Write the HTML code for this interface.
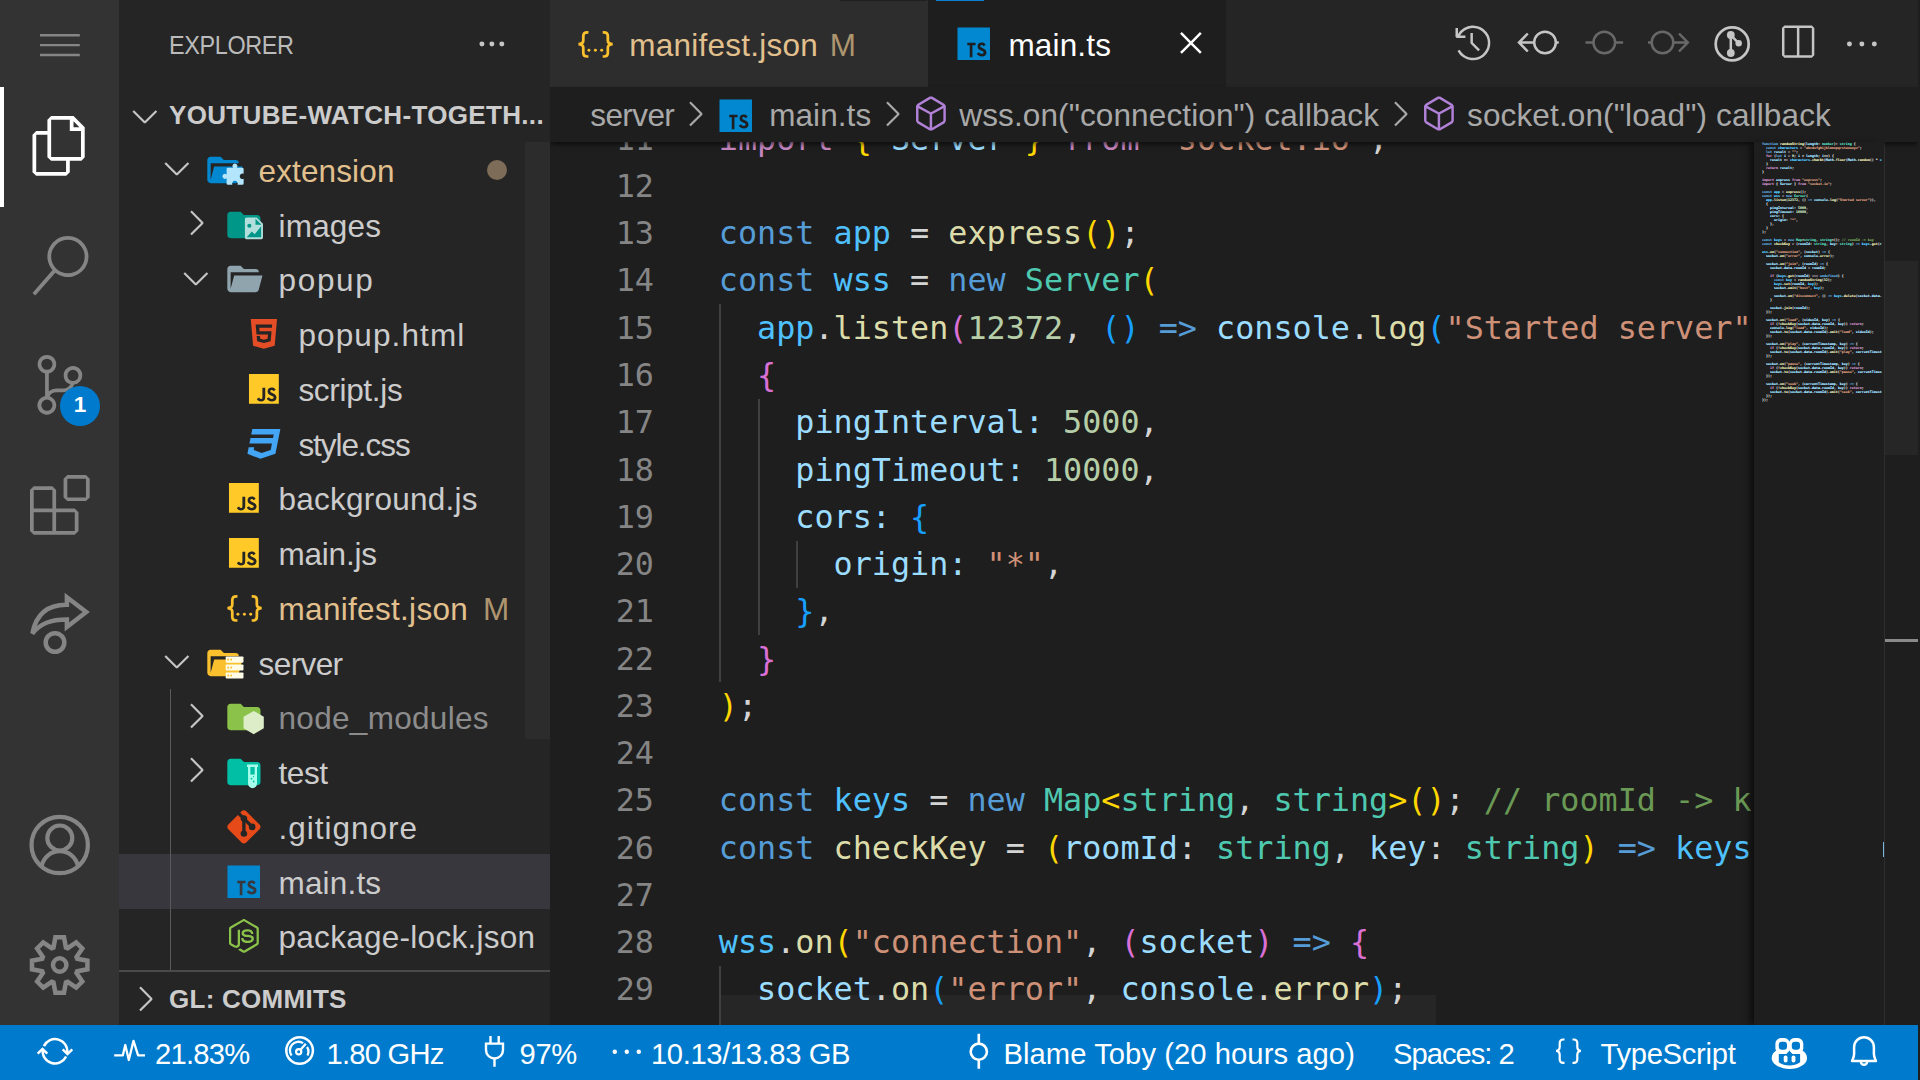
<!DOCTYPE html>
<html lang="en">
<head>
<meta charset="utf-8">
<title>main.ts - youtube-watch-together - Visual Studio Code</title>
<style>
*{box-sizing:border-box;margin:0;padding:0}
html,body{width:1920px;height:1080px;overflow:hidden;background:#1e1e1e}
body{font-family:"Liberation Sans",sans-serif;font-size:31.5px;color:#cccccc;position:relative}
.abs,.abs>*{position:absolute}
#app{position:absolute;left:0;top:0;width:1918px;height:1080px;overflow:hidden;background:#1e1e1e}
#activity{position:absolute;left:0;top:0;width:119px;height:1026px;background:#333333}
#sidebar{position:absolute;left:119px;top:0;width:431px;height:1026px;background:#252526;overflow:hidden}
#editor{position:absolute;left:550px;top:0;width:1368px;height:1026px;background:#1e1e1e;overflow:hidden}
#status{z-index:6;position:absolute;left:0;top:1025px;width:1918px;height:55px;background:#007acc;color:#fff;overflow:hidden}
svg{position:absolute;overflow:visible}
.t{position:absolute;white-space:pre;line-height:1}
/* activity bar */
#activity svg{fill:#858585}
/* sidebar */
.row{position:absolute;left:0;width:431px;height:55px}
.lbl{position:absolute;white-space:pre;line-height:55px;top:2px;font-size:31.5px;color:#cccccc}
.chev{fill:none;stroke:#c5c5c5;stroke-width:2.6;stroke-linecap:butt;stroke-linejoin:miter}
/* code */
#code{position:absolute;left:0;top:142px;width:1202.500px;height:884px;overflow:hidden;font-family:"DejaVu Sans Mono","Liberation Mono",monospace;font-size:31.78px;color:#d4d4d4}
.ln{position:absolute;left:0;height:47.27px;line-height:47.27px;white-space:pre}
.num{position:absolute;left:0;width:104px;text-align:right;color:#858585}
.src{position:absolute;left:168.800px}
.k{color:#569cd6}.c{color:#4fc1ff}.v{color:#9cdcfe}.f{color:#dcdcaa}.ty{color:#4ec9b0}.s{color:#ce9178}.n{color:#b5cea8}.cm{color:#6a9955}.ct{color:#c586c0}
.b1{color:#ffd700}.b2{color:#da70d6}.b3{color:#179fff}
.ml .b1,.ml .b2,.ml .b3{color:#c8c8c8}
.ml{height:4px;white-space:pre;overflow:hidden}
.guide{position:absolute;width:2px;background:#404040}
</style>
</head>
<body>
<div id="app">
<div id="activity">
  <svg style="left:39.6px;top:23.6px" width="39.8" height="39.8" viewBox="0 0 16 16"><path d="M16 5H0V4h16v1zm0 8H0v-1h16v1zm0-4.008H0V8h16v.992z"/></svg>
  <div style="position:absolute;left:0;top:87px;width:4px;height:120px;background:#ffffff"></div>
  <svg style="left:29.6px;top:116.4px;fill:#ffffff" width="59.7" height="59.7" viewBox="0 0 24 24"><path d="M17.5 0h-9L7 1.5V6H2.5L1 7.500v15.07L2.5 24h12.07L16 22.57V18h4.7l1.3-1.43V4.5L17.5 0zm0 2.12l2.38 2.38H17.5V2.12zm-3 20.38h-12v-15H7v9.07L8.5 18h6v4.5zm6-6h-12v-15H16V6h4.5v10.5z"/></svg>
  <svg style="left:29.6px;top:235.8px" width="59.7" height="59.7" viewBox="0 0 24 24"><path d="M15.25 0a8.25 8.25 0 0 0-6.18 13.72L1 22.88l1.12 1 8.05-9.12A8.251 8.251 0 1 0 15.25.01V0zm0 15a6.75 6.75 0 1 1 0-13.5 6.75 6.75 0 0 1 0 13.5z"/></svg>
  <svg style="left:29.6px;top:355.2px" width="59.7" height="59.7" viewBox="0 0 24 24"><path d="M21.007 8.222A3.738 3.738 0 0 0 15.045 5.2a3.737 3.737 0 0 0 1.156 6.583 2.988 2.988 0 0 1-2.668 1.67h-2.99a4.456 4.456 0 0 0-2.989 1.165V7.4a3.737 3.737 0 1 0-1.494 0v9.117a3.776 3.776 0 1 0 1.816.099 2.99 2.99 0 0 1 2.668-1.667h2.99a4.484 4.484 0 0 0 4.223-3.039 3.736 3.736 0 0 0 3.25-3.687zM4.565 3.738a2.242 2.242 0 1 1 4.484 0 2.242 2.242 0 0 1-4.484 0zm4.484 16.441a2.242 2.242 0 1 1-4.484 0 2.242 2.242 0 0 1 4.484 0zm8.221-9.715a2.242 2.242 0 1 1 0-4.485 2.242 2.242 0 0 1 0 4.485z"/></svg>
  <div style="position:absolute;left:60px;top:385.5px;width:40px;height:40px;border-radius:20px;background:#007acc"></div>
  <div class="t" style="left:60px;top:394px;width:40px;text-align:center;font-size:22.5px;font-weight:bold;color:#fff">1</div>
  <svg style="left:29.6px;top:474.6px" width="59.7" height="59.7" viewBox="0 0 24 24"><path d="M13.5 1.5L15 0h7.5L24 1.5V9l-1.5 1.5H15L13.500 9V1.5zm1.5 0V9h7.5V1.5H15zM0 15V6l1.5-1.5H9L10.5 6v7.5H18l1.5 1.5v7.5L18 24H1.5L0 22.5V15zm9-1.5V6H1.5v7.5H9zM9 15H1.5v7.5H9V15zm1.500 7.5H18V15h-7.5v7.5z"/></svg>
  <svg style="left:0;top:0;fill:none;stroke:#858585;stroke-width:4.5" width="119" height="1026" viewBox="0 0 119 1026">
    <path d="M66.9 604.8C50 604.600 36.500 612 32.400 633.500C40.500 623.500 50.500 619.500 66.900 619.500V627L86.200 612L66.900 597.200Z" stroke-linejoin="miter"/>
    <circle cx="55" cy="642.500" r="9.300"/>
    <circle cx="59.700" cy="845" r="28.200" stroke-width="4.200"/>
    <circle cx="59.800" cy="838" r="12.500" stroke-width="4.200"/>
    <path d="M41.400 866.500C43.500 857 51 851.200 59.800 851.200S76.100 857 78.200 866.500" stroke-width="4.200"/>
    <path d="M53.5 947.5L55.4 937.3L64.0 937.3L65.9 947.5L67.7 948.2L76.2 942.4L82.3 948.5L76.5 957.0L77.2 958.8L87.4 960.7L87.4 969.3L77.2 971.2L76.5 973.0L82.3 981.5L76.2 987.6L67.7 981.8L65.9 982.5L64.0 992.7L55.4 992.7L53.5 982.5L51.7 981.8L43.2 987.6L37.1 981.5L42.9 973.0L42.2 971.2L32.0 969.3L32.0 960.7L42.2 958.8L42.9 957.0L37.1 948.5L43.2 942.4L51.7 948.2Z" stroke-linejoin="miter"/>
    <circle cx="59.700" cy="965" r="6.700"/>
  </svg>
</div>
<div id="sidebar">
  <div class="t" style="left:49.500px;top:32px;font-size:26px;color:#bbbbbb;transform:scaleX(.9);transform-origin:0 0;letter-spacing:-0.4px" id="t_explorer">EXPLORER</div>
  <svg style="left:353px;top:23.600px;fill:#c5c5c5" width="39.8" height="39.8" viewBox="0 0 16 16"><circle cx="4" cy="8" r="1"/><circle cx="8" cy="8" r="1"/><circle cx="12" cy="8" r="1"/></svg>
  <svg style="left:5.900px;top:95.600px;fill:#c5c5c5" width="39.8" height="39.8" viewBox="0 0 16 16"><path d="M7.976 10.072l4.357-4.357.62.618L8.284 11h-.618L3 6.333l.619-.618 4.357 4.357z"/></svg>
  <div class="t" style="left:50px;top:102px;font-size:26px;font-weight:bold;color:#cccccc;letter-spacing:0.33px" id="t_root">YOUTUBE-WATCH-TOGETH...</div>
  <div style="position:absolute;left:406px;top:142px;width:25px;height:596.700px;background:#2c2c2d"></div>
  <div class="row" style="top:142.00px">
    <svg style="left:37.5px;top:6.300px;fill:#c5c5c5" width="39.8" height="39.8" viewBox="0 0 16 16"><path d="M7.976 10.072l4.357-4.357.62.618L8.284 11h-.618L3 6.333l.619-.618 4.357 4.357z"/></svg>
    <svg style="left:84.7px;top:8px" width="39.8" height="39.8" viewBox="0 0 24 24"><path fill="#0288d1" d="M19 20H4c-1.110 0-2-.900-2-2V6c0-1.110.890-2 2-2h6l2 2h7a2 2 0 0 1 2 2H4v10l2.140-8h17.070l-2.280 8.500c-.230.870-1.010 1.500-1.930 1.500z"/><path fill="#b3e5fc" d="M14.430 10.740H17.600A1.500 1.500 0 1 1 19.700 10.740H23.100a.800 .800 0 0 1 .800 .800V14.300A1.700 1.700 0 1 0 23.900 17.400V20.200a.800 .800 0 0 1-.800 .800H20.200A1.700 1.700 0 1 0 17.100 21H14.430a.800 .800 0 0 1-.800-.800V17A1.500 1.500 0 1 1 13.630 14.760V11.540a.800 .800 0 0 1 .800-.800Z"/></svg>
    <span class="lbl" style="left:139.6px;color:#e2c08d;letter-spacing:0.12px">extension</span>
    <div style="position:absolute;left:368px;top:17.500px;width:20px;height:20px;border-radius:10px;background:#7d6c57"></div>
  </div>
  <div class="row" style="top:196.74px">
    <svg style="left:57.4px;top:6.300px;fill:#c5c5c5" width="39.8" height="39.8" viewBox="0 0 16 16"><path d="M10.072 8.024L5.715 3.667l.618-.62L11 7.716v.618L6.333 13l-.618-.619 4.357-4.357z"/></svg>
    <svg style="left:104.6px;top:8px" width="39.8" height="39.8" viewBox="0 0 24 24"><path fill="#009688" d="M10 4H4c-1.110 0-2 .890-2 2v12a2 2 0 0 0 2 2h16a2 2 0 0 0 2-2V8c0-1.110-.900-2-2-2h-8l-2-2z"/><g transform="translate(0 -1.200)"><path fill="#b2dfdb" d="M13.700 8.700h6l3.800 3.800v8.300c0 .600-.500 1.100-1.100 1.100h-8.700c-.600 0-1.100-.500-1.100-1.100v-11c0-.600.500-1.100 1.100-1.100z"/><path fill="#009688" d="M19 9.500l3.600 3.600H19zM13.700 20.700l3.100-3.500 1.700 1.600 3.900-4.800v6.700z"/><circle fill="#009688" cx="15.300" cy="13.700" r="1.250"/></g></svg>
    <span class="lbl" style="left:159.5px;letter-spacing:0.2px">images</span>
  </div>
  <div class="row" style="top:251.48px">
    <svg style="left:57.4px;top:6.300px;fill:#c5c5c5" width="39.8" height="39.8" viewBox="0 0 16 16"><path d="M7.976 10.072l4.357-4.357.62.618L8.284 11h-.618L3 6.333l.619-.618 4.357 4.357z"/></svg>
    <svg style="left:104.6px;top:8px" width="39.8" height="39.8" viewBox="0 0 24 24"><path fill="#90a4ae" d="M19 20H4c-1.110 0-2-.900-2-2V6c0-1.110.890-2 2-2h6l2 2h7a2 2 0 0 1 2 2H4v10l2.140-8h17.070l-2.280 8.500c-.230.870-1.010 1.500-1.930 1.500z"/></svg>
    <span class="lbl" style="left:159.5px;letter-spacing:1.67px">popup</span>
  </div>
  <div class="row" style="top:306.22px">
    <svg style="left:124.5px;top:8px" width="39.8" height="39.8" viewBox="0 0 24 24"><path fill="#e44d26" d="M12 17.560l4.070-1.130.550-6.100H9.380L9.200 8.300h7.600l.200-1.990H7l.560 6.010h6.890l-.230 2.580-2.220.600-2.220-.600-.140-1.660h-2l.290 3.190L12 17.560M4.070 3h15.860L18.500 19.200 12 21l-6.500-1.800L4.070 3z"/></svg>
    <span class="lbl" style="left:179.4px;letter-spacing:1.11px">popup.html</span>
  </div>
  <div class="row" style="top:360.96px">
    <svg style="left:124.5px;top:8px" width="39.8" height="39.8" viewBox="0 0 24 24"><path fill="#ffca28" d="M3 3h18v18H3V3m4.730 15.040c.400.850 1.190 1.550 2.540 1.550 1.500 0 2.530-.800 2.530-2.550v-5.780h-1.700V17c0 .860-.350 1.080-.900 1.080-.580 0-.820-.400-1.090-.870l-1.380.830m5.980-.180c.500.980 1.510 1.730 3.090 1.730 1.600 0 2.800-.830 2.800-2.360 0-1.410-.810-2.040-2.250-2.660l-.420-.180c-.730-.310-1.040-.520-1.040-1.020 0-.410.310-.730.810-.730.480 0 .800.210 1.090.730l1.310-.870c-.550-.960-1.330-1.330-2.400-1.330-1.510 0-2.480.960-2.480 2.230 0 1.380.810 2.030 2.030 2.550l.420.180c.780.340 1.240.550 1.240 1.130 0 .480-.450.830-1.150.830-.830 0-1.310-.430-1.670-1.030l-1.380.800z"/></svg>
    <span class="lbl" style="left:179.4px;letter-spacing:-0.31px">script.js</span>
  </div>
  <div class="row" style="top:415.70px">
    <svg style="left:124.5px;top:8px" width="39.8" height="39.8" viewBox="0 0 24 24"><path fill="#42a5f5" d="M5 3l-.650 3.340h13.590L17.500 8.500H3.920l-.660 3.330h13.590l-.760 3.810-5.480 1.810-4.750-1.810.330-1.640H2.850l-.790 4 7.850 3 9.050-3 1.200-6.030.240-1.210L21.940 3H5z"/></svg>
    <span class="lbl" style="left:179.4px;letter-spacing:-1.06px">style.css</span>
  </div>
  <div class="row" style="top:470.44px">
    <svg style="left:104.6px;top:8px" width="39.8" height="39.8" viewBox="0 0 24 24"><path fill="#ffca28" d="M3 3h18v18H3V3m4.730 15.040c.400.850 1.190 1.550 2.540 1.550 1.500 0 2.530-.800 2.530-2.550v-5.780h-1.700V17c0 .860-.350 1.080-.900 1.080-.580 0-.820-.400-1.090-.870l-1.380.830m5.980-.180c.500.980 1.510 1.730 3.090 1.730 1.600 0 2.800-.830 2.800-2.360 0-1.410-.810-2.040-2.250-2.660l-.420-.180c-.730-.310-1.040-.520-1.040-1.020 0-.410.310-.730.810-.730.480 0 .800.210 1.090.730l1.310-.870c-.550-.960-1.330-1.330-2.400-1.330-1.510 0-2.480.960-2.480 2.230 0 1.380.810 2.030 2.030 2.550l.420.180c.780.340 1.240.550 1.240 1.130 0 .480-.450.830-1.150.830-.830 0-1.310-.430-1.670-1.030l-1.380.800z"/></svg>
    <span class="lbl" style="left:159.5px;letter-spacing:0.25px">background.js</span>
  </div>
  <div class="row" style="top:525.18px">
    <svg style="left:104.6px;top:8px" width="39.8" height="39.8" viewBox="0 0 24 24"><path fill="#ffca28" d="M3 3h18v18H3V3m4.730 15.040c.400.850 1.190 1.550 2.540 1.550 1.500 0 2.530-.800 2.530-2.550v-5.780h-1.700V17c0 .860-.350 1.080-.900 1.080-.580 0-.820-.400-1.090-.870l-1.380.830m5.980-.180c.500.980 1.510 1.730 3.090 1.730 1.600 0 2.800-.830 2.800-2.360 0-1.410-.810-2.040-2.250-2.660l-.420-.180c-.730-.310-1.040-.520-1.040-1.020 0-.410.310-.730.810-.730.480 0 .800.210 1.090.730l1.310-.870c-.550-.960-1.330-1.330-2.400-1.330-1.510 0-2.480.960-2.480 2.230 0 1.380.810 2.030 2.030 2.550l.420.180c.780.340 1.240.550 1.240 1.130 0 .480-.450.830-1.150.830-.830 0-1.310-.430-1.670-1.030l-1.380.800z"/></svg>
    <span class="lbl" style="left:159.5px;letter-spacing:-0.22px">main.js</span>
  </div>
  <div class="row" style="top:579.92px">
    <svg style="left:104.6px;top:8px" width="39.8" height="39.8" viewBox="0 0 24 24"><g fill="none" stroke="#fbc02d" stroke-width="1.650"><path d="M8.100 5H7.400C5.600 5 5 5.800 5 7.300v2.700c0 1.400-.900 2.100-2.900 2.200C4.100 12.300 5 13 5 14.400v2.900c0 1.500.600 2.300 2.400 2.300h.700"/><path d="M16.700 5h.700c1.800 0 2.400.800 2.400 2.300v2.700c0 1.400.900 2.100 2.900 2.200-2 .100-2.900.800-2.900 2.200v2.900c0 1.500-.600 2.300-2.400 2.300h-.700"/></g><g fill="#fbc02d"><circle cx="8.400" cy="15.900" r=".900"/><circle cx="12.300" cy="15.900" r=".900"/><circle cx="16.100" cy="15.900" r=".900"/></g></svg>
    <span class="lbl" style="left:159.5px;color:#e2c08d;letter-spacing:0.31px">manifest.json</span>
    <span class="lbl" style="left:364px;color:#ad956f">M</span>
  </div>
  <div class="row" style="top:634.66px">
    <svg style="left:37.5px;top:6.300px;fill:#c5c5c5" width="39.8" height="39.8" viewBox="0 0 16 16"><path d="M7.976 10.072l4.357-4.357.62.618L8.284 11h-.618L3 6.333l.619-.618 4.357 4.357z"/></svg>
    <svg style="left:84.7px;top:8px" width="39.8" height="39.8" viewBox="0 0 24 24"><path fill="#fbc02d" d="M19 20H4c-1.110 0-2-.900-2-2V6c0-1.110.890-2 2-2h6l2 2h7a2 2 0 0 1 2 2H4v10l2.140-8h17.070l-2.280 8.500c-.230.870-1.010 1.500-1.930 1.500z"/><g fill="#fffde7"><rect x="13.100" y="8.150" width="10.700" height="3.700" rx=".500"/><rect x="13.100" y="12.950" width="10.700" height="3.700" rx=".500"/><rect x="13.100" y="17.750" width="10.700" height="3.700" rx=".500"/></g><g fill="#fbc02d"><rect x="14.100" y="9.450" width="1" height="1.100"/><rect x="15.900" y="9.450" width="1" height="1.100"/><rect x="14.100" y="14.250" width="1" height="1.100"/><rect x="15.900" y="14.250" width="1" height="1.100"/><rect x="14.100" y="19.050" width="1" height="1.100"/><rect x="15.900" y="19.050" width="1" height="1.100"/></g></svg>
    <span class="lbl" style="left:139.6px;letter-spacing:-0.6px">server</span>
  </div>
  <div class="row" style="top:689.40px">
    <svg style="left:57.4px;top:6.300px;fill:#c5c5c5" width="39.8" height="39.8" viewBox="0 0 16 16"><path d="M10.072 8.024L5.715 3.667l.618-.62L11 7.716v.618L6.333 13l-.618-.619 4.357-4.357z"/></svg>
    <svg style="left:104.6px;top:8px" width="39.8" height="39.8" viewBox="0 0 24 24"><path fill="#8bc34a" d="M10 4H4c-1.110 0-2 .890-2 2v12a2 2 0 0 0 2 2h16a2 2 0 0 0 2-2V8c0-1.110-.900-2-2-2h-8l-2-2z"/><path fill="#dcedc8" d="M17.900 8.400l6.100 3.500v7l-6.100 3.500-6.100-3.500v-7z"/></svg>
    <span class="lbl" style="left:159.5px;color:#8c8c8c;letter-spacing:0.31px">node_modules</span>
  </div>
  <div class="row" style="top:744.14px">
    <svg style="left:57.4px;top:6.300px;fill:#c5c5c5" width="39.8" height="39.8" viewBox="0 0 16 16"><path d="M10.072 8.024L5.715 3.667l.618-.62L11 7.716v.618L6.333 13l-.618-.619 4.357-4.357z"/></svg>
    <svg style="left:104.6px;top:8px" width="39.8" height="39.8" viewBox="0 0 24 24"><path fill="#00bfa5" d="M10 4H4c-1.110 0-2 .890-2 2v12a2 2 0 0 0 2 2h16a2 2 0 0 0 2-2V8c0-1.110-.900-2-2-2h-8l-2-2z"/><g transform="translate(0 -1.200)"><path fill="#a7ffeb" d="M13.900 8.700h6.600v1.500h-.600v10.100a2.700 2.700 0 0 1-5.400 0V10.200h-.600z"/><path fill="#00bfa5" d="M15.900 10.200h2.600v4.600h-2.600z"/><circle fill="#00bfa5" cx="16.600" cy="17.300" r=".550"/><circle fill="#00bfa5" cx="17.900" cy="19" r=".550"/><circle fill="#00bfa5" cx="17.800" cy="16.100" r=".400"/></g></svg>
    <span class="lbl" style="left:159.5px;letter-spacing:-0.43px">test</span>
  </div>
  <div class="row" style="top:798.88px">
    <svg style="left:104.6px;top:8px" width="39.8" height="39.8" viewBox="0 0 24 24"><path fill="#e64a19" d="M2.600 10.590L8.380 4.800l1.690 1.700c-.240.850.150 1.780.930 2.230v5.540c-.600.340-1 .990-1 1.730a2 2 0 0 0 2 2 2 2 0 0 0 2-2c0-.740-.400-1.390-1-1.730V9.410l2.070 2.090c-.070.150-.070.320-.070.500a2 2 0 0 0 2 2 2 2 0 0 0 2-2 2 2 0 0 0-2-2c-.180 0-.350 0-.500.070L13.930 7.500a1.980 1.980 0 0 0-1.150-2.340c-.430-.160-.880-.200-1.280-.090L9.800 3.380l.790-.780c.780-.790 2.040-.790 2.820 0l7.990 7.990c.790.780.790 2.040 0 2.820l-7.990 7.990c-.780.790-2.040.790-2.820 0L2.600 13.410c-.790-.780-.790-2.040 0-2.820z"/></svg>
    <span class="lbl" style="left:159.5px;letter-spacing:1.0px">.gitignore</span>
  </div>
  <div class="row" style="top:853.62px;background:#37373d">
    <svg style="left:104.6px;top:8px" width="39.8" height="39.8" viewBox="0 0 24 24"><path fill="#0288d1" d="M2.100 2.100h19.600v19.600H2.100V2.100m11.610 15.760c.500.980 1.510 1.730 3.090 1.730 1.600 0 2.800-.830 2.800-2.360 0-1.410-.810-2.040-2.250-2.660l-.420-.180c-.730-.310-1.040-.520-1.040-1.020 0-.410.310-.730.810-.730.480 0 .800.210 1.090.730l1.310-.870c-.550-.960-1.330-1.330-2.400-1.330-1.510 0-2.480.960-2.480 2.230 0 1.380.810 2.030 2.030 2.550l.420.180c.740.320 1.180.520 1.180 1.070 0 .460-.430.790-1.100.790-.800 0-1.250-.410-1.600-.980l-1.310.760M13 11.250H8v1.500h1.500V20h1.610v-7.250H13v-1.500z"/></svg>
    <span class="lbl" style="left:159.5px;letter-spacing:0.17px">main.ts</span>
  </div>
  <div class="row" style="top:908.36px">
    <svg style="left:104.6px;top:8px" width="39.8" height="39.8" viewBox="0 0 24 24"><path fill="#8bc34a" d="M12 1.850c-.270 0-.550.070-.780.200l-7.440 4.300c-.480.280-.780.800-.780 1.360v8.580c0 .560.300 1.080.780 1.360l1.950 1.120c.950.460 1.270.470 1.710.470 1.400 0 2.210-.850 2.210-2.330V8.440c0-.120-.100-.220-.220-.220h-.930c-.130 0-.230.100-.230.220v8.470c0 .660-.680 1.310-1.770.760L4.450 16.500a.26.26 0 0 1-.110-.210V7.710c0-.090.040-.170.110-.210l7.440-4.290c.060-.040.160-.040.220 0l7.440 4.290c.070.040.110.120.110.210v8.580c0 .080-.040.160-.110.210l-7.440 4.290c-.060.040-.160.040-.230 0L10 19.650c-.080-.030-.160-.040-.210-.010-.530.300-.630.360-1.120.510-.120.040-.310.110.070.320l2.480 1.470c.240.140.500.210.780.210s.540-.070.780-.210l7.440-4.290c.480-.280.780-.800.780-1.360V7.710c0-.560-.300-1.080-.780-1.360l-7.440-4.300c-.230-.130-.500-.200-.780-.200M14 8c-2.120 0-3.390.890-3.390 2.390 0 1.610 1.260 2.080 3.300 2.280 2.430.240 2.620.600 2.620 1.080 0 .830-.670 1.180-2.230 1.180-1.980 0-2.400-.490-2.540-1.470a.226.226 0 0 0-.220-.180h-.960c-.120 0-.210.090-.210.220 0 1.240.680 2.740 3.940 2.740 2.350 0 3.700-.930 3.700-2.550 0-1.610-1.080-2.030-3.370-2.340-2.310-.300-2.540-.460-2.540-1 0-.450.200-1.050 1.910-1.050 1.500 0 2.090.330 2.320 1.360.020.100.110.170.210.170h.970c.050 0 .110-.020.150-.070.040-.040.070-.100.050-.160C17.560 8.820 16.380 8 14 8z"/></svg>
    <span class="lbl" style="left:159.5px;letter-spacing:0.28px">package-lock.json</span>
  </div>
  <div style="position:absolute;left:50.500px;top:689.400px;width:1.500px;height:281px;background:#5a5a5a"></div>
  <div style="position:absolute;left:0;top:970.300px;width:431px;height:1.500px;background:#4a4a4b"></div>
  <svg style="left:5.900px;top:978.800px;fill:#c5c5c5" width="39.8" height="39.8" viewBox="0 0 16 16"><path d="M10.072 8.024L5.715 3.667l.618-.62L11 7.716v.618L6.333 13l-.618-.619 4.357-4.357z"/></svg>
  <div class="t" style="left:50px;top:986.300px;font-size:26px;font-weight:bold;color:#cccccc;letter-spacing:0.27px" id="t_gl">GL: COMMITS</div>
</div>
<div id="editor">
  <div id="tabs" style="position:absolute;left:0;top:0;width:1368px;height:87px;background:#252526">
    <div style="position:absolute;left:0;top:0;width:377.500px;height:87px;background:#2d2d2d"></div>
    <div style="position:absolute;left:378px;top:0;width:297.500px;height:87px;background:#1e1e1e"></div>
    <div style="position:absolute;left:290px;top:0;width:87px;height:1.200px;background:#1f1f1f"></div>
    <div style="position:absolute;left:386px;top:0;width:48px;height:1.300px;background:#0a7fd4"></div>
    <svg style="left:24.600px;top:24.400px" width="39.8" height="39.8" viewBox="0 0 24 24"><g fill="none" stroke="#fbc02d" stroke-width="1.650"><path d="M8.100 5H7.400C5.600 5 5 5.800 5 7.300v2.700c0 1.400-.900 2.100-2.900 2.200C4.100 12.300 5 13 5 14.400v2.900c0 1.500.600 2.300 2.400 2.300h.700"/><path d="M16.700 5h.700c1.800 0 2.400.800 2.400 2.300v2.700c0 1.400.900 2.100 2.900 2.200-2 .100-2.900.800-2.900 2.200v2.900c0 1.500-.600 2.300-2.400 2.300h-.700"/></g><g fill="#fbc02d"><circle cx="8.400" cy="15.900" r=".900"/><circle cx="12.300" cy="15.900" r=".900"/><circle cx="16.100" cy="15.900" r=".900"/></g></svg>
    <div class="t" id="tab1" style="left:79.300px;top:30.300px;color:#e2c08d;letter-spacing:0.25px">manifest.json</div>
    <div class="t" style="left:279.800px;top:30.300px;color:#ad956f">M</div>
    <svg style="left:404.300px;top:24.300px" width="39.8" height="39.8" viewBox="0 0 24 24"><path fill="#0288d1" d="M2.100 2.100h19.600v19.600H2.100V2.100m11.610 15.760c.500.980 1.510 1.730 3.090 1.730 1.600 0 2.800-.830 2.800-2.360 0-1.410-.810-2.040-2.250-2.660l-.420-.180c-.730-.310-1.040-.520-1.040-1.020 0-.410.310-.730.810-.730.480 0 .800.210 1.090.730l1.310-.870c-.550-.960-1.330-1.330-2.400-1.330-1.510 0-2.480.960-2.480 2.230 0 1.380.810 2.030 2.030 2.550l.420.180c.740.320 1.180.520 1.180 1.070 0 .460-.430.790-1.100.790-.800 0-1.250-.410-1.600-.980l-1.310.760M13 11.250H8v1.500h1.500V20h1.610v-7.250H13v-1.500z"/></svg>
    <div class="t" id="tab2" style="left:458.400px;top:30.300px;color:#ffffff;letter-spacing:0.17px">main.ts</div>
    <svg style="left:620.700px;top:23.200px;fill:#ffffff" width="39.8" height="39.8" viewBox="0 0 16 16"><path d="M8 8.707l3.646 3.647.708-.707L8.707 8l3.647-3.646-.707-.708L8 7.293 4.354 3.646l-.707.708L7.293 8l-3.646 3.646.707.708L8 8.707z"/></svg>
    <svg style="left:903.4px;top:23.2px;fill:#c5c5c5" width="39.8" height="39.8" viewBox="0 0 16 16"><path d="M13.507 12.324a7 7 0 0 0 .065-8.560A7 7 0 0 0 2 4.393V2H1v3.500l.500.500H5V5H2.811a6.008 6.008 0 1 1-.135 5.770l-.887.462a7 7 0 0 0 11.718 1.092zm-3.361-.970l.708-.707L8 7.792V4H7v4l.146.354 3 3z"/></svg>
    <svg style="left:0;top:0;fill:none;stroke:#c5c5c5;stroke-width:2.500" width="1368" height="87" viewBox="550 0 1368 87">
      <circle cx="1545" cy="42.500" r="10.800"/><path d="M1534.200 42.500H1519.500M1527.800 33.500l-8.800 9 8.800 9M1555.800 42.500h3"/>
      <g stroke="#686868"><circle cx="1604.300" cy="42.500" r="10.800"/><path d="M1585.500 42.500h8M1615.100 42.500h8"/>
      <circle cx="1662.500" cy="42.500" r="10.800"/><path d="M1648 42.500h3.700M1673.300 42.500h14.200M1679 33.500l8.800 9-8.800 9"/></g>
      <circle cx="1732.200" cy="43.900" r="16.500" stroke-width="2.700"/>
      <path d="M1730.800 35v18M1730.800 35l7.900 8.300" stroke-width="2.500"/><g fill="#c5c5c5" stroke="none"><circle cx="1730.800" cy="35" r="3.900"/><circle cx="1730.800" cy="53" r="3.900"/><circle cx="1738.700" cy="43.300" r="3.200"/></g>
    </svg>
    <svg style="left:1226.9px;top:23.2px;fill:#c5c5c5" width="39.8" height="39.8" viewBox="0 0 16 16"><path d="M14 1H3L2 2v11l1 1h11l1-1V2l-1-1zM8 13H3V2h5v11zm6 0H9V2h5v11z"/></svg>
    <svg style="left:1291.6px;top:23.599999999999998px;fill:#c5c5c5" width="39.8" height="39.8" viewBox="0 0 16 16"><circle cx="3" cy="8" r="1"/><circle cx="8" cy="8" r="1"/><circle cx="13" cy="8" r="1"/></svg>
  </div>
  <div id="crumbs" style="position:absolute;left:0;top:87px;width:1368px;height:55px;background:#1e1e1e;color:#a9a9a9;z-index:3;box-shadow:0 3px 5px -1px rgba(0,0,0,.65)">
    <div class="t" id="bc1" style="left:40.3px;top:12.700px;letter-spacing:-0.6px">server</div>
    <svg style="left:125.3px;top:7.400px;fill:#a9a9a9" width="39.8" height="39.8" viewBox="0 0 16 16"><path d="M10.072 8.024L5.715 3.667l.618-.62L11 7.716v.618L6.333 13l-.618-.619 4.357-4.357z"/></svg>
    <svg style="left:165.7px;top:8.700px" width="39.8" height="39.8" viewBox="0 0 24 24"><path fill="#0288d1" d="M2.100 2.100h19.600v19.600H2.100V2.100m11.610 15.760c.500.980 1.510 1.730 3.090 1.730 1.600 0 2.800-.830 2.800-2.360 0-1.410-.810-2.040-2.250-2.660l-.420-.180c-.730-.310-1.040-.520-1.040-1.020 0-.410.310-.730.810-.730.480 0 .800.210 1.090.730l1.310-.870c-.550-.960-1.330-1.330-2.400-1.330-1.510 0-2.480.960-2.480 2.230 0 1.380.810 2.030 2.030 2.550l.420.180c.740.320 1.180.520 1.180 1.070 0 .460-.430.790-1.100.790-.800 0-1.250-.410-1.600-.980l-1.310.760M13 11.250H8v1.500h1.500V20h1.610v-7.250H13v-1.500z"/></svg>
    <div class="t" id="bc2" style="left:219.2px;top:12.700px;letter-spacing:0.08px">main.ts</div>
    <svg style="left:321.8px;top:7.400px;fill:#a9a9a9" width="39.8" height="39.8" viewBox="0 0 16 16"><path d="M10.072 8.024L5.715 3.667l.618-.62L11 7.716v.618L6.333 13l-.618-.619 4.357-4.357z"/></svg>
    <svg style="left:361.0px;top:6.500px;fill:#b180d7" width="39.8" height="39.8" viewBox="0 0 16 16"><path d="M13.510 4l-5-3h-1l-5 3-.490.860v6l.490.850 5 3h1l5-3 .490-.850v-6L13.510 4zm-6 9.560l-4.500-2.700V5.700l4.500 2.450v5.410zM3.270 4.700l4.740-2.840 4.740 2.840-4.740 2.590L3.270 4.700zm9.740 6.160l-4.500 2.700V8.150l4.500-2.450v5.160z"/></svg>
    <div class="t" id="bc3" style="left:409.3px;top:12.700px;letter-spacing:0.12px">wss.on(&quot;connection&quot;) callback</div>
    <svg style="left:829.8px;top:7.400px;fill:#a9a9a9" width="39.8" height="39.8" viewBox="0 0 16 16"><path d="M10.072 8.024L5.715 3.667l.618-.62L11 7.716v.618L6.333 13l-.618-.619 4.357-4.357z"/></svg>
    <svg style="left:869.0px;top:6.500px;fill:#b180d7" width="39.8" height="39.8" viewBox="0 0 16 16"><path d="M13.510 4l-5-3h-1l-5 3-.490.860v6l.490.850 5 3h1l5-3 .490-.850v-6L13.510 4zm-6 9.560l-4.500-2.700V5.700l4.500 2.450v5.410zM3.270 4.700l4.740-2.840 4.740 2.840-4.740 2.590L3.270 4.700zm9.740 6.160l-4.500 2.700V8.150l4.500-2.450v5.160z"/></svg>
    <div class="t" id="bc4" style="left:917.0px;top:12.700px;letter-spacing:0.14px">socket.on(&quot;load&quot;) callback</div>
  </div>
  <div id="code">
    <div style="position:absolute;left:170px;top:853px;width:716px;height:31px;background:#262626"></div>
    <div class="guide" style="left:169.3px;top:162.2px;height:378.2px"></div>
    <div class="guide" style="left:207.5px;top:256.7px;height:236.4px"></div>
    <div class="guide" style="left:245.7px;top:398.6px;height:47.3px"></div>
    <div class="guide" style="left:169.3px;top:824.0px;height:141.8px"></div>
    <div class="ln" style="top:-26.38px"><span class="num">11</span><span class="src"><span class="ct">import</span> <span class="b1">{</span> <span class="v">Server</span> <span class="b1">}</span> <span class="ct">from</span> <span class="s">"socket.io"</span>;</span></div>
    <div class="ln" style="top:20.89px"><span class="num">12</span><span class="src"></span></div>
    <div class="ln" style="top:68.16px"><span class="num">13</span><span class="src"><span class="k">const</span> <span class="c">app</span> = <span class="f">express</span><span class="b1">()</span>;</span></div>
    <div class="ln" style="top:115.43px"><span class="num">14</span><span class="src"><span class="k">const</span> <span class="c">wss</span> = <span class="k">new</span> <span class="ty">Server</span><span class="b1">(</span></span></div>
    <div class="ln" style="top:162.70px"><span class="num">15</span><span class="src">  <span class="c">app</span>.<span class="f">listen</span><span class="b2">(</span><span class="n">12372</span>, <span class="b3">()</span> <span class="k">=&gt;</span> <span class="v">console</span>.<span class="f">log</span><span class="b3">(</span><span class="s">"Started server"</span><span class="b3">)</span><span class="b2">)</span>,</span></div>
    <div class="ln" style="top:209.97px"><span class="num">16</span><span class="src">  <span class="b2">{</span></span></div>
    <div class="ln" style="top:257.24px"><span class="num">17</span><span class="src">    <span class="v">pingInterval:</span> <span class="n">5000</span>,</span></div>
    <div class="ln" style="top:304.51px"><span class="num">18</span><span class="src">    <span class="v">pingTimeout:</span> <span class="n">10000</span>,</span></div>
    <div class="ln" style="top:351.78px"><span class="num">19</span><span class="src">    <span class="v">cors:</span> <span class="b3">{</span></span></div>
    <div class="ln" style="top:399.05px"><span class="num">20</span><span class="src">      <span class="v">origin:</span> <span class="s">"*"</span>,</span></div>
    <div class="ln" style="top:446.32px"><span class="num">21</span><span class="src">    <span class="b3">}</span>,</span></div>
    <div class="ln" style="top:493.59px"><span class="num">22</span><span class="src">  <span class="b2">}</span></span></div>
    <div class="ln" style="top:540.86px"><span class="num">23</span><span class="src"><span class="b1">)</span>;</span></div>
    <div class="ln" style="top:588.13px"><span class="num">24</span><span class="src"></span></div>
    <div class="ln" style="top:635.40px"><span class="num">25</span><span class="src"><span class="k">const</span> <span class="c">keys</span> = <span class="k">new</span> <span class="ty">Map</span><span class="b1">&lt;</span><span class="ty">string</span>, <span class="ty">string</span><span class="b1">&gt;</span><span class="b1">()</span>; <span class="cm">// roomId -&gt; key</span></span></div>
    <div class="ln" style="top:682.67px"><span class="num">26</span><span class="src"><span class="k">const</span> <span class="f">checkKey</span> = <span class="b1">(</span><span class="v">roomId</span>: <span class="ty">string</span>, <span class="v">key</span>: <span class="ty">string</span><span class="b1">)</span> <span class="k">=&gt;</span> <span class="c">keys</span>.<span class="f">get</span><span class="b1">(</span><span class="v">roomId</span><span class="b1">)</span> === <span class="v">key</span>;</span></div>
    <div class="ln" style="top:729.94px"><span class="num">27</span><span class="src"></span></div>
    <div class="ln" style="top:777.21px"><span class="num">28</span><span class="src"><span class="c">wss</span>.<span class="f">on</span><span class="b1">(</span><span class="s">"connection"</span>, <span class="b2">(</span><span class="v">socket</span><span class="b2">)</span> <span class="k">=&gt;</span> <span class="b2">{</span></span></div>
    <div class="ln" style="top:824.48px"><span class="num">29</span><span class="src">  <span class="v">socket</span>.<span class="f">on</span><span class="b3">(</span><span class="s">"error"</span>, <span class="v">console</span>.<span class="f">error</span><span class="b3">)</span>;</span></div>
  </div>
  <div id="minimap" style="position:absolute;left:1204px;top:142px;width:130px;height:884px;background:#1e1e1e;box-shadow:-6px 0 6px -2px rgba(0,0,0,.55);overflow:hidden;z-index:4">
    <div id="mm" style="position:absolute;left:8px;top:0;width:120px;overflow:hidden;font-family:'DejaVu Sans Mono','Liberation Mono',monospace;font-size:3.320px;line-height:4px;color:#d4d4d4;font-weight:bold;text-shadow:0 0 .6px currentColor">
<div class="ml"><span class="k">function</span> <span class="f">randomString</span><span class="b1">(</span><span class="v">length</span>: <span class="ty">number</span><span class="b1">)</span>: <span class="ty">string</span> <span class="b1">{</span></div>
<div class="ml">  <span class="k">const</span> <span class="c">characters</span> = <span class="s">"abcdefghijklmnopqrstuvwxyz"</span>;</div>
<div class="ml">  <span class="k">let</span> <span class="v">result</span> = <span class="s">""</span>;</div>
<div class="ml">  <span class="ct">for</span> <span class="b2">(</span><span class="k">let</span> <span class="v">i</span> = <span class="n">0</span>; <span class="v">i</span> &lt; <span class="v">length</span>; <span class="v">i</span>++<span class="b2">)</span> <span class="b2">{</span></div>
<div class="ml">    <span class="v">result</span> += <span class="c">characters</span>.<span class="f">charAt</span><span class="b3">(</span><span class="v">Math</span>.<span class="f">floor</span><span class="b1">(</span><span class="v">Math</span>.<span class="f">random</span><span class="b2">()</span> * <span class="c">c</span></div>
<div class="ml">  <span class="b2">}</span></div>
<div class="ml">  <span class="ct">return</span> <span class="v">result</span>;</div>
<div class="ml"><span class="b1">}</span></div>
<div class="ml"></div>
<div class="ml"><span class="ct">import</span> <span class="v">express</span> <span class="ct">from</span> <span class="s">"express"</span>;</div>
<div class="ml"><span class="ct">import</span> <span class="b1">{</span> <span class="v">Server</span> <span class="b1">}</span> <span class="ct">from</span> <span class="s">"socket.io"</span>;</div>
<div class="ml"></div>
<div class="ml"><span class="k">const</span> <span class="c">app</span> = <span class="f">express</span><span class="b1">()</span>;</div>
<div class="ml"><span class="k">const</span> <span class="c">wss</span> = <span class="k">new</span> <span class="ty">Server</span><span class="b1">(</span></div>
<div class="ml">  <span class="c">app</span>.<span class="f">listen</span><span class="b2">(</span><span class="n">12372</span>, <span class="b3">()</span> <span class="k">=&gt;</span> <span class="v">console</span>.<span class="f">log</span><span class="b3">(</span><span class="s">"Started server"</span><span class="b3">)</span><span class="b2">)</span>,</div>
<div class="ml">  <span class="b2">{</span></div>
<div class="ml">    <span class="v">pingInterval:</span> <span class="n">5000</span>,</div>
<div class="ml">    <span class="v">pingTimeout:</span> <span class="n">10000</span>,</div>
<div class="ml">    <span class="v">cors:</span> <span class="b3">{</span></div>
<div class="ml">      <span class="v">origin:</span> <span class="s">"*"</span>,</div>
<div class="ml">    <span class="b3">}</span>,</div>
<div class="ml">  <span class="b2">}</span></div>
<div class="ml"><span class="b1">)</span>;</div>
<div class="ml"></div>
<div class="ml"><span class="k">const</span> <span class="c">keys</span> = <span class="k">new</span> <span class="ty">Map</span><span class="b1">&lt;</span><span class="ty">string</span>, <span class="ty">string</span><span class="b1">&gt;</span><span class="b1">()</span>; <span class="cm">// roomId -&gt; key</span></div>
<div class="ml"><span class="k">const</span> <span class="f">checkKey</span> = <span class="b1">(</span><span class="v">roomId</span>: <span class="ty">string</span>, <span class="v">key</span>: <span class="ty">string</span><span class="b1">)</span> <span class="k">=&gt;</span> <span class="c">keys</span>.<span class="f">get</span><span class="b1">(</span><span class="v">r</span></div>
<div class="ml"></div>
<div class="ml"><span class="c">wss</span>.<span class="f">on</span><span class="b1">(</span><span class="s">"connection"</span>, <span class="b2">(</span><span class="v">socket</span><span class="b2">)</span> <span class="k">=&gt;</span> <span class="b2">{</span></div>
<div class="ml">  <span class="v">socket</span>.<span class="f">on</span><span class="b3">(</span><span class="s">"error"</span>, <span class="v">console</span>.<span class="f">error</span><span class="b3">)</span>;</div>
<div class="ml"></div>
<div class="ml">  <span class="v">socket</span>.<span class="f">on</span><span class="b3">(</span><span class="s">"join"</span>, <span class="b1">(</span><span class="v">roomId</span><span class="b1">)</span> <span class="k">=&gt;</span> <span class="b1">{</span></div>
<div class="ml">    <span class="v">socket</span>.<span class="v">data</span>.<span class="v">roomId</span> = <span class="v">roomId</span>;</div>
<div class="ml"></div>
<div class="ml">    <span class="ct">if</span> <span class="b2">(</span><span class="c">keys</span>.<span class="f">get</span><span class="b3">(</span><span class="v">roomId</span><span class="b3">)</span> === <span class="k">undefined</span><span class="b2">)</span> <span class="b2">{</span></div>
<div class="ml">      <span class="k">const</span> <span class="c">key</span> = <span class="f">randomString</span><span class="b3">(</span><span class="n">32</span><span class="b3">)</span>;</div>
<div class="ml">      <span class="c">keys</span>.<span class="f">set</span><span class="b3">(</span><span class="v">roomId</span>, <span class="c">key</span><span class="b3">)</span>;</div>
<div class="ml">      <span class="v">socket</span>.<span class="f">emit</span><span class="b3">(</span><span class="s">"host"</span>, <span class="c">key</span><span class="b3">)</span>;</div>
<div class="ml"></div>
<div class="ml">      <span class="v">socket</span>.<span class="f">on</span><span class="b3">(</span><span class="s">"disconnect"</span>, <span class="b1">()</span> <span class="k">=&gt;</span> <span class="c">keys</span>.<span class="f">delete</span><span class="b1">(</span><span class="v">socket</span>.<span class="v">data</span>.</div>
<div class="ml">    <span class="b2">}</span></div>
<div class="ml"></div>
<div class="ml">    <span class="v">socket</span>.<span class="f">join</span><span class="b2">(</span><span class="v">roomId</span><span class="b2">)</span>;</div>
<div class="ml">  <span class="b1">}</span><span class="b3">)</span>;</div>
<div class="ml"></div>
<div class="ml">  <span class="v">socket</span>.<span class="f">on</span><span class="b3">(</span><span class="s">"load"</span>, <span class="b1">(</span><span class="v">videoId</span>, <span class="v">key</span><span class="b1">)</span> <span class="k">=&gt;</span> <span class="b1">{</span></div>
<div class="ml">    <span class="ct">if</span> <span class="b2">(</span>!<span class="f">checkKey</span><span class="b3">(</span><span class="v">socket</span>.<span class="v">data</span>.<span class="v">roomId</span>, <span class="v">key</span><span class="b3">)</span><span class="b2">)</span> <span class="ct">return</span>;</div>
<div class="ml">    <span class="v">console</span>.<span class="f">log</span><span class="b2">(</span><span class="s">"load"</span>, <span class="v">videoId</span><span class="b2">)</span>;</div>
<div class="ml">    <span class="v">socket</span>.<span class="f">to</span><span class="b2">(</span><span class="v">socket</span>.<span class="v">data</span>.<span class="v">roomId</span><span class="b2">)</span>.<span class="f">emit</span><span class="b2">(</span><span class="s">"load"</span>, <span class="v">videoId</span><span class="b2">)</span>;</div>
<div class="ml">  <span class="b1">}</span><span class="b3">)</span>;</div>
<div class="ml"></div>
<div class="ml">  <span class="v">socket</span>.<span class="f">on</span><span class="b3">(</span><span class="s">"play"</span>, <span class="b1">(</span><span class="v">currentTimestamp</span>, <span class="v">key</span><span class="b1">)</span> <span class="k">=&gt;</span> <span class="b1">{</span></div>
<div class="ml">    <span class="ct">if</span> <span class="b2">(</span>!<span class="f">checkKey</span><span class="b3">(</span><span class="v">socket</span>.<span class="v">data</span>.<span class="v">roomId</span>, <span class="v">key</span><span class="b3">)</span><span class="b2">)</span> <span class="ct">return</span>;</div>
<div class="ml">    <span class="v">socket</span>.<span class="f">to</span><span class="b2">(</span><span class="v">socket</span>.<span class="v">data</span>.<span class="v">roomId</span><span class="b2">)</span>.<span class="f">emit</span><span class="b2">(</span><span class="s">"play"</span>, <span class="v">currentTimest</span></div>
<div class="ml">  <span class="b1">}</span><span class="b3">)</span>;</div>
<div class="ml"></div>
<div class="ml">  <span class="v">socket</span>.<span class="f">on</span><span class="b3">(</span><span class="s">"pause"</span>, <span class="b1">(</span><span class="v">currentTimestamp</span>, <span class="v">key</span><span class="b1">)</span> <span class="k">=&gt;</span> <span class="b1">{</span></div>
<div class="ml">    <span class="ct">if</span> <span class="b2">(</span>!<span class="f">checkKey</span><span class="b3">(</span><span class="v">socket</span>.<span class="v">data</span>.<span class="v">roomId</span>, <span class="v">key</span><span class="b3">)</span><span class="b2">)</span> <span class="ct">return</span>;</div>
<div class="ml">    <span class="v">socket</span>.<span class="f">to</span><span class="b2">(</span><span class="v">socket</span>.<span class="v">data</span>.<span class="v">roomId</span><span class="b2">)</span>.<span class="f">emit</span><span class="b2">(</span><span class="s">"pause"</span>, <span class="v">currentTimes</span></div>
<div class="ml">  <span class="b1">}</span><span class="b3">)</span>;</div>
<div class="ml"></div>
<div class="ml">  <span class="v">socket</span>.<span class="f">on</span><span class="b3">(</span><span class="s">"seek"</span>, <span class="b1">(</span><span class="v">currentTimestamp</span>, <span class="v">key</span><span class="b1">)</span> <span class="k">=&gt;</span> <span class="b1">{</span></div>
<div class="ml">    <span class="ct">if</span> <span class="b2">(</span>!<span class="f">checkKey</span><span class="b3">(</span><span class="v">socket</span>.<span class="v">data</span>.<span class="v">roomId</span>, <span class="v">key</span><span class="b3">)</span><span class="b2">)</span> <span class="ct">return</span>;</div>
<div class="ml">    <span class="v">socket</span>.<span class="f">to</span><span class="b2">(</span><span class="v">socket</span>.<span class="v">data</span>.<span class="v">roomId</span><span class="b2">)</span>.<span class="f">emit</span><span class="b2">(</span><span class="s">"seek"</span>, <span class="v">currentTimest</span></div>
<div class="ml">  <span class="b1">}</span><span class="b3">)</span>;</div>
<div class="ml"><span class="b2">}</span><span class="b1">)</span>;</div>
    </div>
  </div>
  <div style="position:absolute;left:1334px;top:142px;width:1px;height:884px;background:#303030"></div>
  <div style="position:absolute;left:1335px;top:261px;width:33px;height:194px;background:#262626"></div>
  <div style="position:absolute;left:1335px;top:638.500px;width:33px;height:3px;background:#8a8a8a"></div>
  <div style="position:absolute;left:1332.500px;top:842px;width:1.500px;height:15px;background:#7ab8e0;z-index:5"></div>
</div>
<div id="status">
  <svg style="left:0;top:0;fill:none;stroke:#ffffff;stroke-width:2.500" width="1918" height="55" viewBox="0 1025 1918 55">
    <path d="M67.2 1053.0A12.3 12.3 0 0 0 43.9 1046.1M42.8 1049.6A12.3 12.3 0 0 0 66.1 1056.5"/>
    <path d="M62.700 1049.300l4.800 4.800 4.800-4.800M37.700 1053.700l4.800-4.800 4.800 4.800" stroke-linejoin="miter"/>
    <path d="M114.200 1055.300h8.600l2.500-10.300 3.500 15 4.700-19.200 4.600 14.500h6.900" stroke-width="2.300" stroke-linejoin="round"/>
    <circle cx="299.600" cy="1050.500" r="13.300"/><path d="M291.600 1055.500a8.600 8.600 0 0 1 11.500-12.400M307 1047a8.600 8.600 0 0 1 .500 8.500" stroke-width="2.300"/><circle cx="298.700" cy="1051.800" r="2.600" stroke-width="2.200"/><path d="M300.500 1049.800l5.300-6" stroke-width="2.300"/>
    <path d="M490.500 1036v7.500M498.700 1036v7.500M486 1043.600v6.400a8.500 8.500 0 0 0 17 0v-6.400zM494.500 1058.500v8.200" stroke-width="2.400"/>
    <g fill="#ffffff" stroke="none"><circle cx="614.800" cy="1051.700" r="2.200"/><circle cx="626.800" cy="1051.700" r="2.200"/><circle cx="638.800" cy="1051.700" r="2.200"/></g>
    <circle cx="978.800" cy="1051.700" r="8.100" stroke-width="2.600"/><path d="M978.800 1033.800v9.800M978.800 1059.800v9" stroke-width="2.600"/>
    <path d="M1564.500 1039.500h-1.200c-2.600 0-3.600 1.200-3.600 3.600v3.600c0 2.600-1.200 3.900-3.600 4.100 2.400.200 3.600 1.500 3.600 4.100v4.400c0 2.400 1 3.600 3.600 3.600h1.200M1572.500 1039.500h1.200c2.600 0 3.600 1.200 3.600 3.600v3.600c0 2.600 1.200 3.900 3.600 4.100-2.400.200-3.600 1.500-3.600 4.100v4.400c0 2.400-1 3.600-3.600 3.600h-1.200" stroke-width="2.200"/>
    <g fill="#ffffff" stroke="none"><path d="M1776.500 1050.500C1772.800 1052.500 1771.700 1055.500 1771.700 1058.500C1771.700 1064 1780 1069 1789.400 1069S1807 1064 1807 1058.500C1807 1055.500 1805.900 1052.500 1802.200 1050.500Z"/><rect x="1775.400" y="1038.100" width="14.400" height="15.600" rx="5.500"/><rect x="1788.900" y="1038.100" width="14.400" height="15.600" rx="5.500"/></g>
    <g fill="#007acc" stroke="none"><rect x="1778.800" y="1041.800" width="8.200" height="7.900" rx="3"/><rect x="1791.800" y="1041.800" width="8.200" height="7.900" rx="3"/><path d="M1778.800 1053.900H1786.300L1789.400 1050.800L1792.500 1053.900H1800.100V1062.300C1797 1064.600 1793 1065.600 1789.400 1065.600S1781.800 1064.600 1778.800 1062.300Z"/></g>
    <g fill="#ffffff" stroke="none"><rect x="1783.700" y="1055.400" width="3.800" height="7.200" rx="1.800"/><rect x="1791.600" y="1055.400" width="3.800" height="7.200" rx="1.800"/></g>
    <path d="M1854.100 1054V1047.200a9.900 9.900 0 0 1 19.800 0V1054c0 2.500 1 4.500 2 7H1852.100c1-2.500 2-4.500 2-7z" stroke-width="2.500" stroke-linejoin="round"/><path d="M1860.700 1062a3.400 3.600 0 0 0 6.600 0" stroke-width="2.300"/>
  </svg>
  <div class="t" id="st1" style="left:155.0px;top:14.500px;font-size:29.200px;letter-spacing:-0.74px">21.83%</div>
  <div class="t" id="st2" style="left:326.5px;top:14.500px;font-size:29.200px;letter-spacing:-0.77px">1.80 GHz</div>
  <div class="t" id="st3" style="left:519.5px;top:14.500px;font-size:29.200px;letter-spacing:-0.35px">97%</div>
  <div class="t" id="st4" style="left:651.0px;top:14.500px;font-size:29.200px;letter-spacing:-0.38px">10.13/13.83 GB</div>
  <div class="t" id="st5" style="left:1003.5px;top:14.500px;font-size:29.200px;letter-spacing:0.06px">Blame Toby (20 hours ago)</div>
  <div class="t" id="st6" style="left:1393.0px;top:14.500px;font-size:29.200px;letter-spacing:-1.0px">Spaces: 2</div>
  <div class="t" id="st7" style="left:1600.5px;top:14.500px;font-size:29.200px;letter-spacing:-0.29px">TypeScript</div>
</div>
</div>
</body>
</html>
